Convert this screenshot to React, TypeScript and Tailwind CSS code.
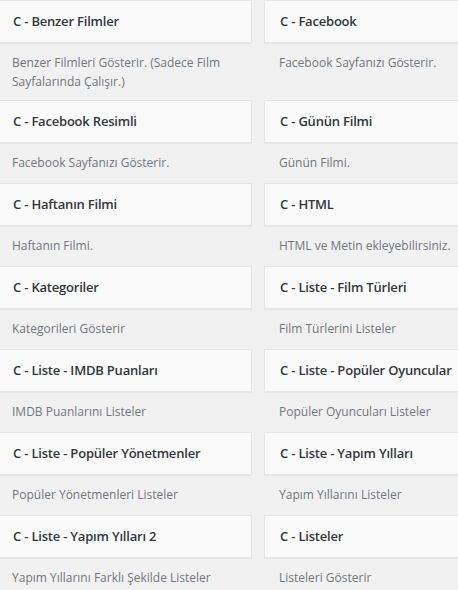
import React from "react";

const rows: [string, string, string, string][] = [
  ["C - Benzer Filmler", "Benzer Filmleri Gösterir. (Sadece Film Sayfalarında Çalışır.)", "C - Facebook", "Facebook Sayfanızı Gösterir."],
  ["C - Facebook Resimli", "Facebook Sayfanızı Gösterir.", "C - Günün Filmi", "Günün Filmi."],
  ["C - Haftanın Filmi", "Haftanın Filmi.", "C - HTML", "HTML ve Metin ekleyebilirsiniz."],
  ["C - Kategoriler", "Kategorileri Gösterir", "C - Liste - Film Türleri", "Film Türlerini Listeler"],
  ["C - Liste - IMDB Puanları", "IMDB Puanlarını Listeler", "C - Liste - Popüler Oyuncular", "Popüler Oyuncuları Listeler"],
  ["C - Liste - Popüler Yönetmenler", "Popüler Yönetmenleri Listeler", "C - Liste - Yapım Yılları", "Yapım Yıllarını Listeler"],
  ["C - Liste - Yapım Yılları 2", "Yapım Yıllarını Farklı Şekilde Listeler", "C - Listeler", "Listeleri Gösterir"],
];

function Widget({ title, desc }: { title: string; desc: string }) {
  return (
    <div className="flex flex-col">
      <div className="h-[43px] border border-[#e5e5e5] bg-[#fafafa] shadow-[0_1px_1px_rgba(0,0,0,0.04)] flex items-center px-[15px]">
        <h3 className="text-[13px] font-semibold tracking-[-0.2px] text-[#32373c] leading-none whitespace-nowrap">{title}</h3>
      </div>
      <p className="pt-[10px] pb-[9px] px-[15px] min-h-[40px] text-[12px] leading-[19px] text-[#72777c]">{desc}</p>
    </div>
  );
}

export default function App() {
  return (
    <div
      className="w-[458px] h-[590px] overflow-hidden bg-[#f1f1f1]"
      style={{ fontFamily: '"Open Sans", "Noto Sans", sans-serif' }}
    >
      <div className="ml-[-3px] w-[530px] grid grid-cols-[255px_255px] gap-x-[12px]">
        {rows.map((r, i) => (
          <React.Fragment key={i}>
            <Widget title={r[0]} desc={r[1]} />
            <Widget title={r[2]} desc={r[3]} />
          </React.Fragment>
        ))}
      </div>
    </div>
  );
}
